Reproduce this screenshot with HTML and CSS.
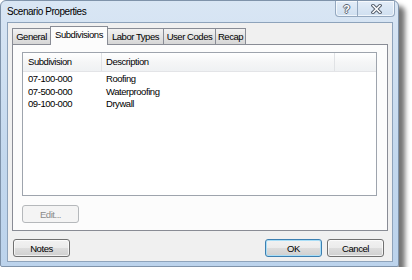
FILE: index.html
```html
<!DOCTYPE html>
<html lang="en">
<head>
    <meta charset="UTF-8">
    <title>Scenario Properties</title>
    <link rel="stylesheet" href="styles.css">
</head>
<body>
    <!-- Dialog window -->
    <div class="window">
        <div class="titlebar">
            <span class="title">Scenario Properties</span>
            <div class="caption-buttons">
                <span class="cap-btn help">?</span>
                <span class="cap-btn close">
                    <svg width="11" height="10" viewBox="0 0 11 10">
                        <path d="M2 1.5 L9 8.5 M9 1.5 L2 8.5" stroke="#56606e" stroke-width="3.4" stroke-linecap="square"/>
                        <path d="M2 1.5 L9 8.5 M9 1.5 L2 8.5" stroke="#ffffff" stroke-width="1.5" stroke-linecap="square"/>
                    </svg>
                </span>
            </div>
        </div>

        <div class="client">
            <!-- Tab strip -->
            <div class="tabs">
                <span class="tab tab-general">General</span>
                <span class="tab tab-sub active">Subdivisions</span>
                <span class="tab tab-labor">Labor Types</span>
                <span class="tab tab-codes">User Codes</span>
                <span class="tab tab-recap">Recap</span>
            </div>

            <div class="tab-panel">
                <div class="list">
                    <div class="list-header">
                        <span class="col col-sub">Subdivision</span>
                        <span class="col col-desc">Description</span>
                        <span class="col col-rest"></span>
                    </div>
                    <div class="list-row">
                        <span class="col col-sub">07-100-000</span>
                        <span class="col col-desc">Roofing</span>
                    </div>
                    <div class="list-row">
                        <span class="col col-sub">07-500-000</span>
                        <span class="col col-desc">Waterproofing</span>
                    </div>
                    <div class="list-row">
                        <span class="col col-sub">09-100-000</span>
                        <span class="col col-desc">Drywall</span>
                    </div>
                </div>
                <button class="btn" disabled>Edit...</button>
            </div>

            <div class="footer">
                <button class="btn">Notes</button>
                <span class="spacer"></span>
                <button class="btn default">OK</button>
                <button class="btn">Cancel</button>
            </div>
        </div>
    </div>
</body>
</html>
```

FILE: styles.css
```css
/* Page */
body {
    margin: 0;
    background: #ffffff;
    font-family: "Liberation Sans", Arial, sans-serif;
    font-size: 9.5px;
    letter-spacing: -0.45px; /* narrow look of the original dialog font */
    color: #000;
}

/* Aero style window frame */
.window {
    width: 399px;
    height: 267px;
    box-sizing: border-box;
    border: 1px solid #7f93aa;
    border-radius: 6px 6px 2px 2px;
    background: linear-gradient(#d9e6f4, #c3d8ee 60%, #bcd3ec);
    box-shadow: 6px 6px 5px rgba(0, 0, 0, 0.55);
    display: flex;
    flex-direction: column;
}

.titlebar {
    height: 21px;
    display: flex;
    justify-content: space-between;
    align-items: flex-start;
}

.title {
    padding: 5px 0 0 6px;
    font-size: 10px;
}

.caption-buttons {
    display: flex;
    height: 15px;
    margin-right: 3px;
    border: 1px solid #94a8bf;
    border-top: none;
    border-radius: 0 0 4px 4px;
    box-shadow: inset 0 0 0 1px rgba(255, 255, 255, 0.7);
    background: linear-gradient(#e3edf8, #cfdff0);
}

.cap-btn {
    display: flex;
    align-items: center;
    justify-content: center;
    height: 15px;
}

.help {
    width: 21px;
    border-right: 1px solid #94a8bf;
    font-size: 11px;
    font-weight: bold;
    letter-spacing: 0;
    color: #fff;
    text-shadow: 1px 0 #5a6472, -1px 0 #5a6472, 0 1px #5a6472, 0 -1px #5a6472;
}

.close {
    width: 36px;
}

/* Grey client area */
.client {
    margin: 0 5px 0 6px;
    height: 240px;
    box-sizing: border-box;
    background: #f0f0f0;
    border: 1px solid #8ea3bb;
    display: flex;
    flex-direction: column;
}

/* Tabs */
.tabs {
    height: 21px;
    padding-left: 4px;
    display: flex;
    align-items: flex-end;
}

.tab {
    height: 16px;
    box-sizing: border-box;
    display: flex;
    align-items: center;
    justify-content: center;
    border: 1px solid #898c95;
    border-bottom: none;
    border-right: none;
    background: linear-gradient(#f2f2f2, #e4e4e4 50%, #d6d6d6);
    white-space: nowrap;
}

.tab-recap {
    border-right: 1px solid #898c95;
}

.tab.active {
    height: 19px;
    margin-bottom: -1px;
    position: relative;
    z-index: 1;
    background: #fcfcfc;
    border-right: 1px solid #898c95;
    padding-bottom: 3px;
}

.tab.active + .tab {
    border-left: none;
}

.tab-general { width: 38px; }
.tab-sub     { width: 58px; }
.tab-labor   { width: 55px; }
.tab-codes   { width: 52px; }
.tab-recap   { width: 31px; }

.tab-panel {
    margin: 0 4px;
    height: 187px;
    box-sizing: border-box;
    border: 1px solid #898c95;
    background: #fcfcfc;
    padding: 7px 10px 0 9px;
    display: flex;
    flex-direction: column;
    align-items: flex-start;
}

/* List view */
.list {
    align-self: stretch;
    height: 144px;
    box-sizing: border-box;
    border: 1px solid #9ea4ad;
    background: #fff;
}

.list-header {
    display: flex;
    height: 19px;
    box-sizing: border-box;
    border-bottom: 1px solid #e3e4e7;
    background: linear-gradient(#ffffff, #f5f6f7 50%, #eff1f3);
    align-items: center;
}

.list-header .col {
    height: 18px;
    line-height: 18px;
    box-sizing: border-box;
    border-right: 1px solid #e0e2e5;
}

.list-header .col-rest {
    flex: 1;
    border-right: none;
}

.col-sub {
    width: 79px;
    padding-left: 5px;
    box-sizing: border-box;
}

.col-desc {
    width: 233px;
    padding-left: 4px;
    box-sizing: border-box;
}

.list-row {
    display: flex;
    height: 12.5px;
    line-height: 12.5px;
}

.list-header + .list-row {
    margin-top: 1px;
}

/* Buttons */
.btn {
    width: 57px;
    height: 18px;
    padding: 0;
    font-family: inherit;
    font-size: 9.5px;
    letter-spacing: -0.45px;
    color: #000;
    border: 1px solid #707070;
    border-radius: 3px;
    background: linear-gradient(#f2f2f2, #ebebeb 50%, #dddddd 51%, #cfcfcf);
    box-shadow: inset 0 0 0 1px rgba(255, 255, 255, 0.7);
}

.btn:disabled {
    color: #8a8a8a;
    border-color: #b5b8bb;
    background: #f4f4f4;
    box-shadow: none;
}

.tab-panel .btn {
    margin: 9px 0 0 0;
}

.btn.default {
    border-color: #3c7fb1;
    box-shadow: inset 0 0 0 1px #a9def7;
}

.footer {
    margin-top: 8px;
    padding: 0 8px 0 5px;
    display: flex;
    gap: 5px;
}

.spacer {
    flex: 1;
}
```
